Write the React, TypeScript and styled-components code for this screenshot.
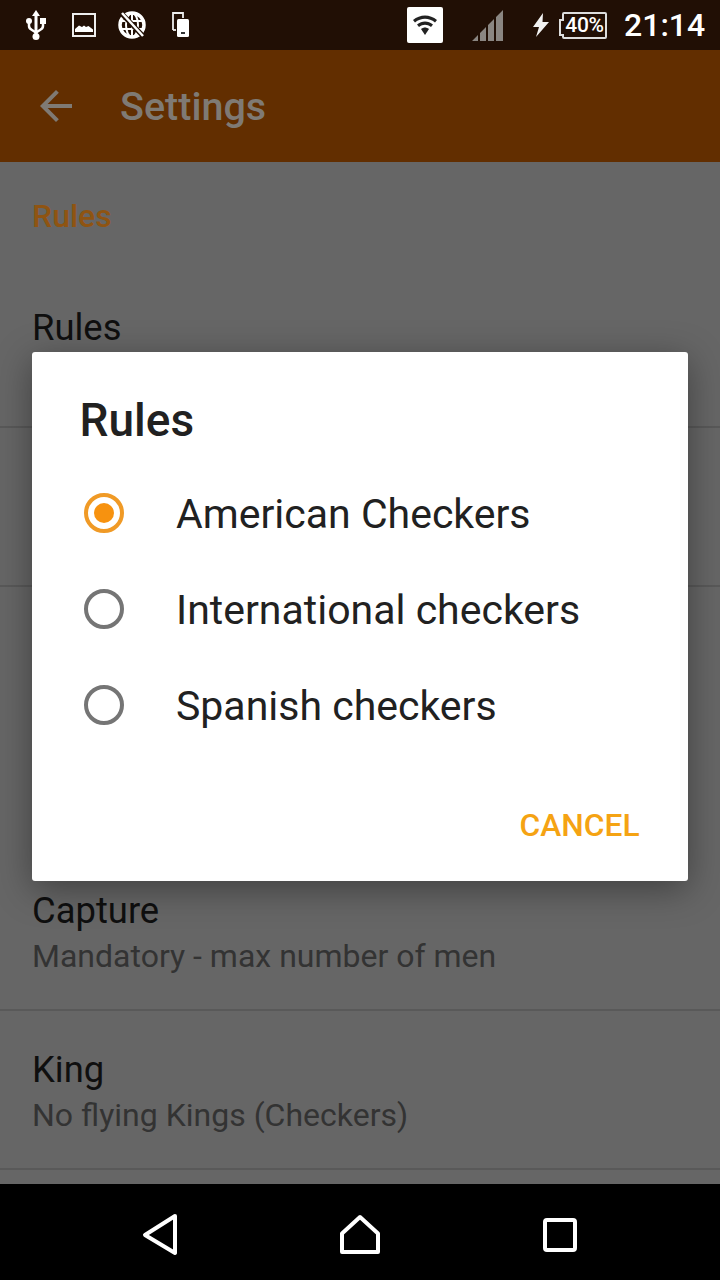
import styled, { createGlobalStyle } from "styled-components";

const GlobalStyle = createGlobalStyle`
  html, body {
    margin: 0;
    padding: 0;
    background: #000;
    font-family: Roboto, "Liberation Sans", sans-serif;
  }
`;

const rules = ["American Checkers", "International checkers", "Spanish checkers"];

export default function App() {
  return (
    <>
      <GlobalStyle />
      <Screen>
        <StatusBar>
          <StatusIcon $gap={26} width="20" height="30" viewBox="0 0 20 30">
            <path d="M10 0l4 6h-8z" fill="#fff" />
            <path d="M10 5v21" stroke="#fff" strokeWidth="3" />
            <path d="M3 12v4c0 2 1 3 3 4l4 2.500 4-2.500c2-1 3-2 3-4v-4" fill="none" stroke="#fff" strokeWidth="2.500" />
            <circle cx="3" cy="11" r="3" fill="#fff" />
            <rect x="14" y="8" width="6" height="6" fill="#fff" />
            <circle cx="10" cy="26.500" r="3.500" fill="#fff" />
          </StatusIcon>
          <StatusIcon $gap={26} width="24" height="24" viewBox="0 0 24 24">
            <rect x="1" y="1" width="22" height="22" fill="none" stroke="#eee" strokeWidth="2" />
            <path d="M3 19v-3l4-3.500 3 1.500 2-1.500 2 1.500 2.500-1 4.500 3.500V19z" fill="#fff" />
          </StatusIcon>
          <StatusIcon $gap={22} width="28" height="30" viewBox="0 0 28 30">
            <circle cx="14" cy="15" r="12" fill="none" stroke="#fff" strokeWidth="3.500" />
            <path d="M14 3v24M2 11h24M2 19h24" stroke="#fff" strokeWidth="2" />
            <ellipse cx="14" cy="15" rx="6" ry="12" fill="none" stroke="#fff" strokeWidth="2" />
            <path d="M4 4l21 22" stroke="#210f05" strokeWidth="5" />
            <path d="M4 3l21 23" stroke="#fff" strokeWidth="2.500" />
          </StatusIcon>
          <StatusIcon $gap={26} width="18" height="26" viewBox="0 0 18 26">
            <path d="M1 18V1h10v5" fill="none" stroke="#eee" strokeWidth="1.800" />
            <path d="M1 18h3" stroke="#eee" strokeWidth="1.800" />
            <rect x="5" y="7" width="12" height="18" rx="1.500" fill="#fff" />
            <path d="M9 20h4v2H9z" fill="#333" />
          </StatusIcon>
          <WifiBox>
            <svg width="26" height="26" viewBox="0 0 26 26">
              <path d="M1 8c7-6 17-6 24 0l-2 2.500c-6-5-14-5-20 0z" fill="#222" />
              <path d="M5 12.500c5-4 11-4 16 0L19 15c-4-3-8-3-12 0z" fill="#222" />
              <path d="M9 17c3-2 5-2 8 0l-4 6z" fill="#222" />
            </svg>
          </WifiBox>
          <StatusIcon $gap={29} width="31" height="31" viewBox="0 0 31 31">
            <path d="M0 31l6-6v6zM8 31V23l6-6v14zM16 31V15l6-6v22zM24 31V7l7-7v31z" fill="#8a8682" />
          </StatusIcon>
          <StatusIcon $gap={30} width="16" height="24" viewBox="0 0 16 24">
            <path d="M10 0L0 14h6l-3 10L16 9H9.500z" fill="#f2f2f2" />
          </StatusIcon>
          <Battery>40%</Battery>
          <Clock>21:14</Clock>
        </StatusBar>

        <AppBar>
          <svg width="48" height="48" viewBox="0 0 24 24">
            <path d="M20 11H7.830l5.590-5.590L12 4l-8 8 8 8 1.410-1.410L7.830 13H20v-2z" fill="#7f7a74" />
          </svg>
          <AppTitle>Settings</AppTitle>
        </AppBar>

        <Content>
          <SectionHeader>Rules</SectionHeader>
          <Row>
            <RowTitle>Rules</RowTitle>
            <RowValue>American Checkers</RowValue>
          </Row>
          <Row />
          <Row $tall>
            <RowTitle>Capture</RowTitle>
            <RowValue>Mandatory - max number of men</RowValue>
          </Row>
          <Row>
            <RowTitle>King</RowTitle>
            <RowValue>No flying Kings (Checkers)</RowValue>
          </Row>
        </Content>

        <NavBar>
          <NavSlot>
            <svg width="40" height="44" viewBox="0 0 40 44">
              <path d="M35 3L5 22l30 18z" fill="none" stroke="#fff" strokeWidth="4" strokeLinejoin="round" />
            </svg>
          </NavSlot>
          <NavSlot>
            <svg width="44" height="44" viewBox="0 0 44 44">
              <path d="M22 4L4 20.500V39h36V20.500z" fill="none" stroke="#fff" strokeWidth="4" strokeLinejoin="round" />
            </svg>
          </NavSlot>
          <NavSlot>
            <svg width="36" height="36" viewBox="0 0 36 36">
              <rect x="3" y="3" width="30" height="30" rx="2" fill="none" stroke="#fff" strokeWidth="4" />
            </svg>
          </NavSlot>
        </NavBar>

        <Dialog>
          <DialogTitle>Rules</DialogTitle>
          {rules.map((rule, i) => (
            <Option key={rule}>
              <Radio $checked={i === 0} />
              <OptionLabel>{rule}</OptionLabel>
            </Option>
          ))}
          <DialogFooter>
            <CancelButton>CANCEL</CancelButton>
          </DialogFooter>
        </Dialog>
      </Screen>
    </>
  );
}

const Screen = styled.div`
  position: relative;
  display: flex;
  flex-direction: column;
  width: 720px;
  height: 1280px;
  overflow: hidden;
  background: #666;
`;

const StatusBar = styled.div`
  display: flex;
  align-items: center;
  flex: none;
  height: 50px;
  background: #210f05;
`;

const StatusIcon = styled.svg<{ $gap: number }>`
  flex: none;
  margin-left: ${(p) => p.$gap}px;
`;

const WifiBox = styled.div`
  display: flex;
  align-items: center;
  justify-content: center;
  width: 36px;
  height: 36px;
  margin-left: 217px;
  background: #fff;
  border-radius: 2px;
`;

const Battery = styled.div`
  position: relative;
  box-sizing: border-box;
  display: flex;
  align-items: center;
  justify-content: center;
  width: 45px;
  height: 27px;
  margin-left: 13px;
  border: 2px solid #ddd;
  border-radius: 2px;
  color: #fff;
  font-size: 21px;
  font-weight: 500;
  letter-spacing: -0.3px;

  &::before {
    content: "";
    position: absolute;
    left: -5px;
    top: 5px;
    width: 3px;
    height: 13px;
    border: 2px solid #ddd;
    border-right: none;
    background: #210f05;
  }
`;

const Clock = styled.div`
  margin-left: 17px;
  color: #fff;
  font-size: 32px;
  font-weight: 500;
  line-height: 50px;
`;

const AppBar = styled.header`
  display: flex;
  align-items: center;
  gap: 40px;
  flex: none;
  height: 112px;
  padding-left: 32px;
  background: #622e00;
`;

const AppTitle = styled.h1`
  margin: 0;
  color: #7f7a74;
  font-size: 39.5px;
  font-weight: 500;
`;

const Content = styled.main`
  flex: 1;
  min-height: 0;
`;

const SectionHeader = styled.h2`
  box-sizing: border-box;
  height: 107px;
  margin: 0;
  padding: 34px 32px 0;
  color: #8f5412;
  font-size: 32px;
  font-weight: 500;
  line-height: 40px;
`;

const Row = styled.div<{ $tall?: boolean }>`
  box-sizing: border-box;
  height: ${(p) => (p.$tall ? 424 : 159)}px;
  padding: ${(p) => (p.$tall ? 301 : 36)}px 32px 0;
  border-bottom: 2px solid #595959;
`;

const RowTitle = styled.div`
  color: #0f0f0f;
  font-size: 36.4px;
  line-height: 46px;
`;

const RowValue = styled.div`
  color: #333;
  font-size: 32px;
  line-height: 44px;
`;

const NavBar = styled.nav`
  display: grid;
  grid-template-columns: repeat(3, 200px);
  justify-content: center;
  flex: none;
  height: 96px;
  background: #000;
`;

const NavSlot = styled.div`
  display: flex;
  align-items: center;
  justify-content: center;
  padding-top: 6px;
`;

const Dialog = styled.section`
  position: absolute;
  left: 32px;
  top: 352px;
  box-sizing: border-box;
  width: 656px;
  height: 529px;
  padding-top: 41px;
  background: #fff;
  border-radius: 3px;
  box-shadow: 0 8px 36px rgba(0, 0, 0, 0.38);
`;

const DialogTitle = styled.h2`
  margin: 0 0 19px;
  padding-left: 47.5px;
  color: #212121;
  font-size: 46px;
  font-weight: 500;
  line-height: 54px;
`;

const Option = styled.div`
  display: flex;
  align-items: center;
  gap: 52px;
  height: 96px;
  padding-left: 52px;
`;

const Radio = styled.span<{ $checked: boolean }>`
  box-sizing: border-box;
  display: flex;
  align-items: center;
  justify-content: center;
  width: 40px;
  height: 40px;
  margin-bottom: 2px;
  border: 4px solid ${(p) => (p.$checked ? "#f09a26" : "#757575")};
  border-radius: 50%;

  &::after {
    content: "";
    display: ${(p) => (p.$checked ? "block" : "none")};
    width: 20px;
    height: 20px;
    border-radius: 50%;
    background: #f7920f;
  }
`;

const OptionLabel = styled.span`
  color: #212121;
  font-size: 41px;
`;

const DialogFooter = styled.div`
  display: flex;
  justify-content: flex-end;
  padding: 49px 48.5px 0 0;
`;

const CancelButton = styled.span`
  color: #f5a313;
  font-size: 31.7px;
  font-weight: 500;
  line-height: 46px;
`;
